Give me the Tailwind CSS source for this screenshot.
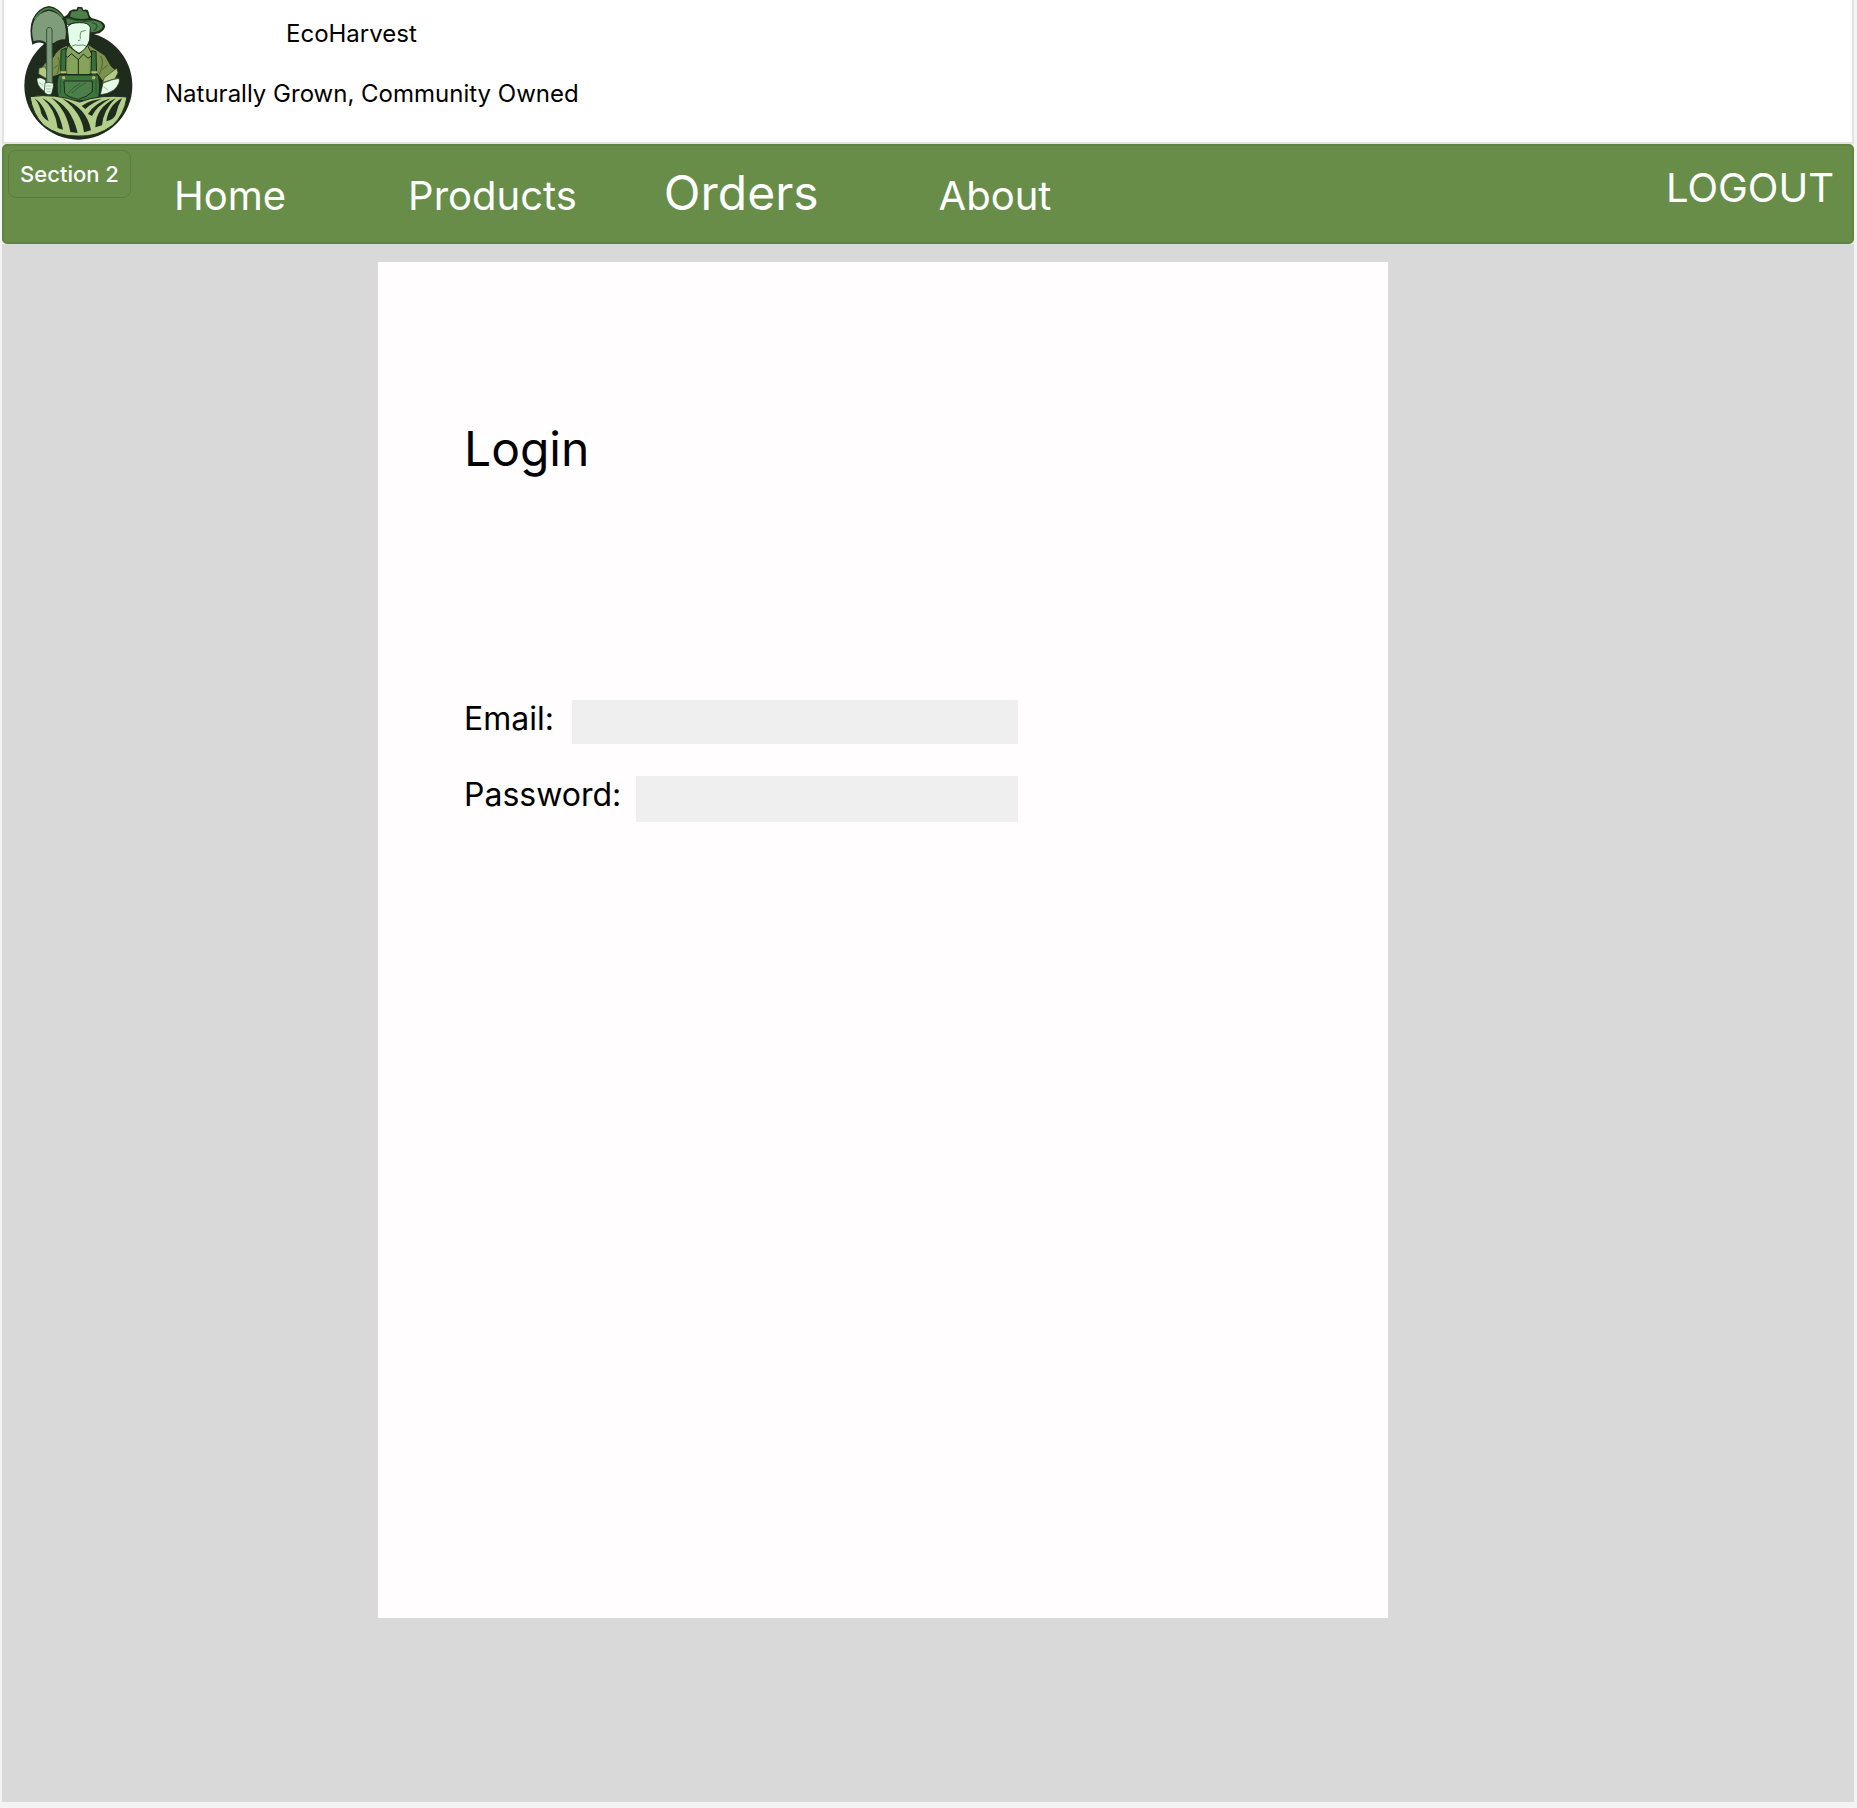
<!DOCTYPE html>
<html lang="en">
<head>
<meta charset="utf-8">
<title>EcoHarvest</title>
<script src="https://cdn.jsdelivr.net/npm/@tailwindcss/browser@4"></script>
</head>
<body class="flex min-h-screen flex-col bg-[#f4f4f4] pr-[3px] pb-[6px] pl-[2px] font-['Inter',sans-serif] text-black">
  <header class="flex items-start border-x-2 border-b-2 border-[#e3e3e3] bg-white pl-5">
    <svg class="my-[5px] mb-0.5 h-[135px] w-[110px] shrink-0" viewBox="72 15 330 405" role="img" aria-label="EcoHarvest farmer logo">
      <!-- badge disc -->
      <circle cx="235" cy="257" r="162" fill="#1f2b1c"/>
      <!-- hat -->
      <path d="M188 52 Q204 47 208 34 Q220 25 229 29 L233 20 L247 22 L250 30 Q264 26 266 36 Q268 50 276 55 Q318 64 315 82 Q308 104 270 103 L260 75 L200 75Z" fill="#1f2b1c"/>
      <path d="M210 50 Q212 37 216 34 Q225 35 233 33 L236 25 L244 26 L248 34 Q258 33 261 38 L266 55 Q235 60 210 50Z" fill="#4c8048"/>
      <path d="M198 55 Q235 67 271 60 Q307 64 309 80 Q302 96 272 97 Q270 74 246 68 Q215 64 202 76Z" fill="#4c8048"/>
      <path d="M204 54 Q240 69 276 62 M276 68 Q303 75 281 93" fill="none" stroke="#28562c" stroke-width="4"/>
      <!-- sleeves and shirt -->
      <path d="M198 137 Q170 148 160 171 Q130 188 120 211 L145 234 L182 223 L196 222 L292 222 L310 246 Q340 238 354 216 L334 199 L315 166 Q289 149 266 134Z" fill="#7a924b" stroke="#1f2b1c" stroke-width="3"/>
      <path d="M202 166 L230 165 L236 180 L248 162 L268 165 L268 222 L202 222Z" fill="#86a35c"/>
      <path d="M302 168 Q314 187 298 224 M307 208 L323 196 M174 171 Q183 188 172 222 M161 206 L174 195" fill="none" stroke="#344b25" stroke-width="2"/>
      <path d="M204 137 L193 164 L203 172 L214 161 L235 179 L250 162 L264 175 L277 166 L262 135 L237 162Z" fill="#86a35c" stroke="#1f2b1c" stroke-width="3"/>
      <path d="M235 178 V222" stroke="#1f2b1c" stroke-width="3"/>
      <!-- face and beard -->
      <path d="M202 82 Q208 68 238 68 Q266 67 271 82 L269 120 Q260 148 237 160 Q213 147 206 127Z" fill="#e4fbe8" stroke="#1f2b1c" stroke-width="3"/>
      <path d="M257 91 L243 95 Q239 106 241 117 M234 122 L241 120 M215 139 Q226 132 235 136 L250 135 Q255 137 260 140" fill="none" stroke="#31543a" stroke-width="2"/>
      <!-- rolled cuffs, arms -->
      <path d="M117 205 L134 200 L143 215 L140 236 L116 222Z M313 233 L350 205 L354 218 L345 236 L308 248Z" fill="#b3c985" stroke="#344b25" stroke-width="2"/>
      <path d="M111 235 Q121 229 137 240 L140 278 Q115 266 111 243Z M309 249 Q338 237 357 235 Q363 249 342 270 Q320 284 301 284Z" fill="#e4fbe8" stroke="#1f2b1c" stroke-width="2"/>
      <path d="M310 260 L324 270 M117 247 L130 257" stroke="#84a68a" stroke-width="2"/>
      <!-- overalls -->
      <path d="M183 151 L198 144 L197 222 L182 222Z M275 152 L288 155 L290 230 L273 224Z" fill="#356f39" stroke="#1f2b1c" stroke-width="3"/>
      <path d="M176 225 H294 Q302 253 296 292 Q235 314 175 291 Q167 252 176 225Z" fill="#3c753e" stroke="#1f2b1c" stroke-width="3"/>
      <path d="M192 243 H277 V275 Q260 292 235 298 Q205 292 194 280Z" fill="#4c8048" stroke="#1f2b1c" stroke-width="3"/>
      <path d="M204 280 Q220 259 241 251 M215 280 Q235 260 258 248 M181 236 V281 M288 236 V281" fill="none" stroke="#234b27" stroke-width="2"/>
      <path d="M181 217 H198 M274 217 H291" stroke="#c0b875" stroke-width="6"/>
      <circle cx="191" cy="233" r="5" fill="#c0b875"/><circle cx="281" cy="233" r="5" fill="#c0b875"/>
      <!-- shovel -->
      <path d="M97 134 Q85 87 98 57 Q115 22 147 18 Q178 23 195 54 Q206 80 202 124 Q177 122 163 135 L137 135 Q119 121 97 134Z" fill="#1f2b1c"/>
      <path d="M101 124 Q91 92 102 63 Q117 36 147 32 Q176 36 191 63 Q201 88 196 118 Q177 116 162 129 L138 128 Q122 116 101 124Z" fill="#7f9d7a"/>
      <path d="M104 57 Q121 28 147 25 Q172 28 188 54" fill="none" stroke="#4c8048" stroke-width="5"/>
      <path d="M140 87 Q148 77 156 87 L157 257 H140Z" fill="#7f9d7a" stroke="#31543a" stroke-width="3"/>
      <path d="M135 249 Q146 245 160 250 L160 260 L155 281 Q142 289 133 276Z" fill="#e4fbe8" stroke="#1f2b1c" stroke-width="2"/>
      <path d="M138 258 H154 M138 267 H154 M140 275 H152" stroke="#84a68a" stroke-width="2"/>
      <!-- ploughed field -->
      <path d="M90 290 Q164 279 239 306 Q300 282 381 291 Q373 344 338 376 Q290 412 235 408 Q177 411 130 375 Q98 342 90 290Z" fill="#b4ce8c" stroke="#1f2b1c" stroke-width="3"/>
      <g fill="#1f2b1c">
        <path d="M104 296 Q131 309 146 364 Q123 352 121 328 Q116 308 104 296Z"/>
        <path d="M126 294 Q174 313 189 389 L173 384 Q166 326 126 294Z"/>
        <path d="M154 293 Q214 317 233 399 L211 396 Q200 330 154 293Z"/>
        <path d="M186 295 Q260 322 273 391 L252 397 Q245 336 186 295Z"/>
        <path d="M245 318 Q271 299 306 297 Q276 308 256 327Z"/>
        <path d="M264 342 Q286 307 333 295 Q289 319 276 348Z"/>
        <path d="M286 382 Q287 322 347 295 Q310 330 306 376Z"/>
        <path d="M319 364 Q326 315 366 295 Q353 318 347 345 Q340 359 319 364Z"/>
      </g>
    </svg>
    <div class="ml-[31px] flex flex-col gap-8 pt-5 text-2xl leading-7">
      <p class="pl-[121px]">EcoHarvest</p>
      <p class="whitespace-nowrap">Naturally Grown, Community Owned</p>
    </div>
  </header>

  <nav class="flex h-[100px] shrink-0 items-start rounded-[5px] border-2 border-[#5f8442] bg-[#678d48] p-1 pr-[18px] text-[40px] leading-[56px] text-white">
    <div class="flex h-12 w-[123px] shrink-0 justify-center rounded-lg border border-[#587c3d] pt-[9px] text-[22px] leading-7 font-medium">Section 2</div>
    <ul class="mt-[15px] ml-[43px] flex items-baseline">
      <li class="mr-[122px]"><a href="#">Home</a></li>
      <li class="mr-[87px]"><a href="#">Products</a></li>
      <li class="mr-[120px] text-5xl leading-[56px]"><a href="#">Orders</a></li>
      <li><a href="#">About</a></li>
    </ul>
    <button type="button" class="mt-2.5 ml-auto">LOGOUT</button>
  </nav>

  <main class="grow bg-[#d9d9d9] pt-[18px] pr-[466px] pb-[184px] pl-[376px]">
    <section class="min-h-[1356px] bg-[#fffdfe] pt-[159px] pl-[86px]">
      <h1 class="text-5xl leading-[56px]">Login</h1>
      <form class="mt-[222px] flex w-[554px] flex-col gap-[31px] text-[32px] leading-10">
        <div class="flex items-start gap-[18px]">
          <label for="email">Email:</label>
          <input id="email" type="email" class="mt-px h-11 min-w-0 flex-1 bg-[#efefef] px-2 text-2xl outline-none">
        </div>
        <div class="flex items-start gap-[15px]">
          <label for="password">Password:</label>
          <input id="password" type="password" class="mt-px h-[46px] min-w-0 flex-1 bg-[#efefef] px-2 text-2xl outline-none">
        </div>
      </form>
    </section>
  </main>
</body>
</html>
